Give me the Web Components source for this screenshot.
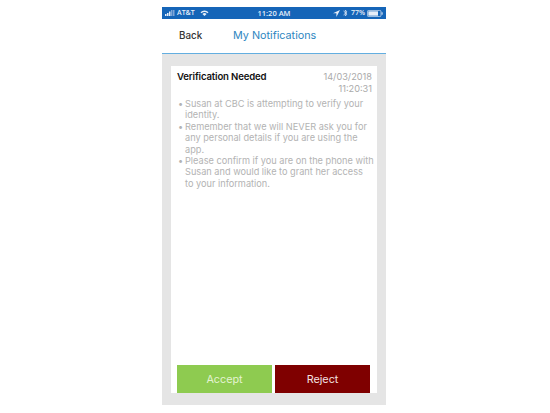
<!DOCTYPE html>
<html><head><meta charset="utf-8"><style>
html,body{margin:0;padding:0;background:#fff;height:413px;overflow:hidden}
body{display:flex;justify-content:center;font-family:"Inter","Liberation Sans",sans-serif}
</style></head><body>
<phone-screen>
<status-bar></status-bar>
<nav-bar heading="My Notifications" back="Back"></nav-bar>
<notification-card title-text="Verification Needed" date="14/03/2018" time="11:20:31">
<bullet-item>Susan at CBC is attempting to verify your identity.</bullet-item>
<bullet-item>Remember that we will NEVER ask you for any personal details if you are using the app.</bullet-item>
<bullet-item>Please confirm if you are on the phone with Susan and would like to grant her access<br>to your information.</bullet-item>
</notification-card>
</phone-screen>
<script>
function def(name,html,init){customElements.define(name,class extends HTMLElement{constructor(){super();this.attachShadow({mode:'open'}).innerHTML=typeof html==='function'?html(this):html;}connectedCallback(){if(init)init(this)}})}
def('phone-screen',`<style>:host{display:flex;flex-direction:column;width:224px;height:405px;margin-left:-2px;padding-top:7px;box-sizing:border-box}</style><slot></slot>`);
def('status-bar',`<style>
:host{display:flex;align-items:center;height:12px;background:#1565b8;color:#e6eef8;font:600 7px/12px "Open Sans",sans-serif;padding:0 3px;flex:none}
.l,.r{display:flex;align-items:center;gap:2px;flex:1}
.r{justify-content:flex-end}
.c{font-size:7.5px}
svg{display:block}
</style>
<div class="l"><svg width="10" height="6" viewBox="0 0 10 6"><rect x="0" y="4" width="1.5" height="2" fill="#e6eef8"/><rect x="2" y="3" width="1.5" height="3" fill="#e6eef8"/><rect x="4" y="1.5" width="1.5" height="4.5" fill="#e6eef8"/><rect x="6" y="0" width="1.5" height="6" fill="#7fa6d8"/><rect x="8" y="0" width="1.5" height="6" fill="#7fa6d8"/></svg><span>AT&amp;T</span><svg width="9" height="6" viewBox="0 0 9 6" style="margin-left:3px"><path d="M.5 2.2A5.5 5.5 0 0 1 8.5 2.2L7.4 3.3A4 4 0 0 0 1.6 3.3ZM2.4 4A3 3 0 0 1 6.6 4L4.5 6Z" fill="#e6eef8"/></svg></div>
<div class="c">11:20 AM</div>
<div class="r"><svg width="7" height="7" viewBox="0 0 7 7"><path d="M7 0 0 3.2h3.4V7Z" fill="#e6eef8"/></svg><svg width="5" height="8" viewBox="0 0 5 8" style="margin-left:1px"><path d="M.5 2 4 5 2.3 7V1L4 3 .5 6" fill="none" stroke="#e6eef8" stroke-width=".7"/></svg><span style="margin-left:1px">77%</span><svg width="16" height="7" viewBox="0 0 16 7"><rect x=".4" y=".4" width="13.6" height="6.2" rx="1.3" fill="none" stroke="#e6eef8" stroke-width=".7"/><rect x="1.3" y="1.3" width="9.7" height="4.4" fill="#e6eef8"/><rect x="14.6" y="2.3" width="1" height="2.4" fill="#e6eef8"/></svg></div>`);
def('nav-bar',h=>`<style>
:host{display:flex;align-items:center;height:35px;box-sizing:border-box;border-bottom:1px solid #63aee0;padding:0 0 1px 17px;flex:none;background:#fff}
.b{font:500 9.8px "Inter",sans-serif;color:#333;width:54px}
.t{font:400 10.8px "Inter",sans-serif;color:#2e86c1}
</style><span class="b">${h.getAttribute('back')||'Back'}</span><span class="t">${h.getAttribute('heading')||'My Notifications'}</span>`);
def('bullet-item',`<style>
:host{display:flex}
.m{flex:none;width:8px;padding-left:1px;box-sizing:border-box}
</style><span class="m">•</span><span><slot></slot></span>`);
def('notification-card',`<style>
:host{display:flex;flex:1;background:#e5e5e5;padding:12px 9px;min-height:0}
.card{flex:1;background:#fff;display:flex;flex-direction:column;padding:4px 5px 0 6px;min-width:0}
.head{display:flex;justify-content:space-between;align-items:flex-start;height:28px}
.title{font:600 9.6px/12px "Inter",sans-serif;color:#111;letter-spacing:-.15px;padding-top:1px}
.date{font:400 9.2px/11.5px "Inter",sans-serif;color:#aaa;text-align:right;padding-top:1px}
.body{flex:1;margin-right:-3px;font:400 9.2px/11.4px "Inter",sans-serif;color:#b3b3b3}
.btns{display:flex;gap:3px;padding-right:2px}
action-btn{flex:1}
</style>
<div class="card"><div class="head"><div class="title"></div><div class="date"></div></div>
<div class="body"><slot></slot></div>
<div class="btns"><action-btn style="--bg:#8ecb50;--fg:#e4f3d2">Accept</action-btn><action-btn style="--bg:#7f0000;--fg:#f2e2e2">Reject</action-btn></div></div>`,
el=>{const s=el.shadowRoot;s.querySelector('.title').textContent=el.getAttribute('title-text');s.querySelector('.date').innerHTML=el.getAttribute('date')+'<br>'+el.getAttribute('time');});
def('action-btn',`<style>:host{display:flex;align-items:center;justify-content:center;height:28px;background:var(--bg);color:var(--fg);font:400 10.8px "Inter",sans-serif}</style><slot></slot>`);
</script>
</body></html>
